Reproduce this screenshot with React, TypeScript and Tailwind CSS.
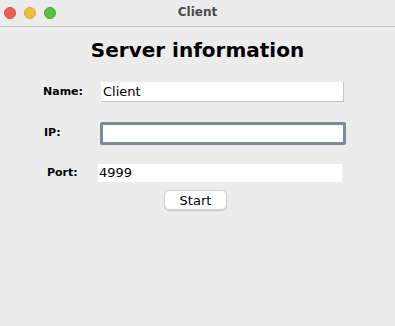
import React from 'react';

function App() {
  return (
    <div className="h-[326px] w-[395px] overflow-hidden bg-[#ececec] font-['DejaVu_Sans',sans-serif] text-black">
      <div className="relative flex h-[27px] items-center border-b border-[#c8c8c8] bg-[#ececec]">
        <div className="flex items-center gap-2 pl-[4px]">
          <span className="h-3 w-3 rounded-full border border-[#d9493f] bg-[#ec5f56]" />
          <span className="h-3 w-3 rounded-full border border-[#d9a52a] bg-[#f1bc37]" />
          <span className="h-3 w-3 rounded-full border border-[#3fa62c] bg-[#55c33f]" />
        </div>
        <div className="absolute inset-x-0 top-0 flex h-[24px] items-center justify-center text-[12px] font-bold text-[#4a4a4a]">
          Client
        </div>
      </div>

      <h1 className="mt-[9px] text-center text-[20px] font-bold leading-[28px]">Server information</h1>

      <div className="mt-[18px] flex items-center">
        <span className="ml-[43px] w-[58px] text-[11px] font-bold">Name:</span>
        <div className="flex h-[20px] w-[243px] items-center border-b border-r border-[#c4c4c4] bg-white pl-[2px] text-[13px]">Client</div>
      </div>

      <div className="mt-[20px] flex items-center">
        <span className="ml-[44px] w-[56px] text-[11px] font-bold">IP:</span>
        <div className="h-[23px] w-[246px] rounded-[2px] border-[3px] border-[#7d899d] bg-white" />
      </div>

      <div className="mt-[19px] flex items-center">
        <span className="ml-[47px] w-[51px] text-[11px] font-bold">Port:</span>
        <div className="flex h-[18px] w-[244px] items-center bg-white pl-[1px] text-[13px]">4999</div>
      </div>

      <div className="mt-[8px] flex justify-center pr-[4px]">
        <button className="h-[20px] w-[63px] rounded-[5px] border border-[#d0d0d0] bg-white text-[13px] leading-none shadow-[0_1px_1px_rgba(0,0,0,0.15)]">
          Start
        </button>
      </div>
    </div>
  );
}

export default App;
